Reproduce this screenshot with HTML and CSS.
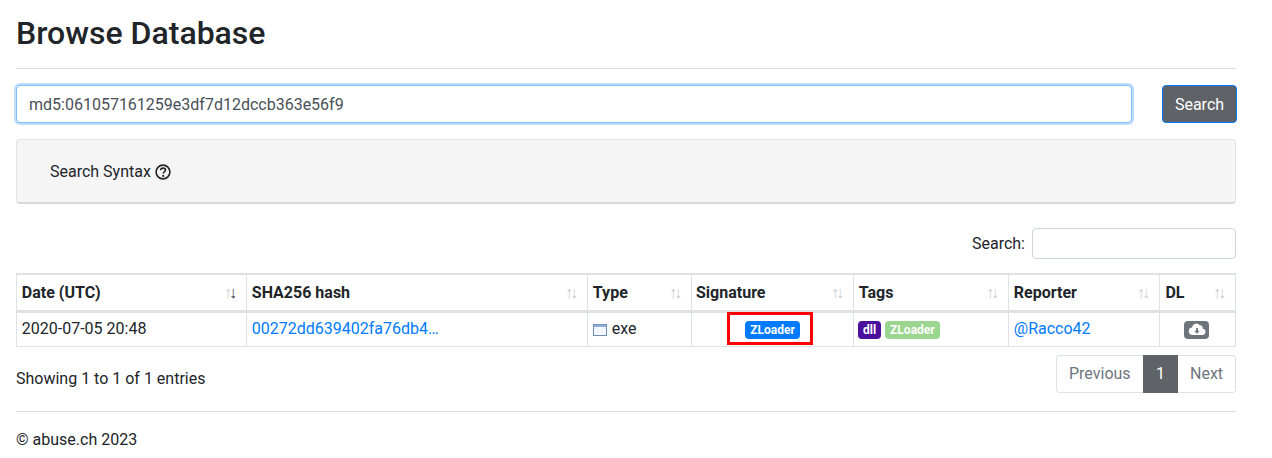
FILE: index.html
```html
<!DOCTYPE html>
<html lang="en">
<head>
<meta charset="utf-8">
<title>Browse Database</title>
<link rel="stylesheet" href="styles.css">
</head>
<body>
<div class="page">
  <h1 class="title">Browse Database</h1>
  <hr class="rule">
  <form class="search-row">
    <input class="search-input" type="text" value="md5:061057161259e3df7d12dccb363e56f9">
    <button class="search-btn" type="button">Search</button>
  </form>
  <div class="syntax">
    <span>Search Syntax</span>
    <svg class="help" viewBox="0 0 16 16" aria-hidden="true"><circle cx="8" cy="8" r="6.9" fill="none" stroke="#212529" stroke-width="1.6"/><path d="M5.6 6.3c.1-1.5 1.1-2.2 2.5-2.2 1.4 0 2.4.8 2.4 2 0 .9-.5 1.3-1.2 1.8-.7.4-1 .7-1 1.4v.3" fill="none" stroke="#212529" stroke-width="1.6"/><circle cx="8.2" cy="11.9" r="1.05" fill="#212529"/></svg>
  </div>
  <div class="filter">
    <label class="filter-label" for="f">Search:</label>
    <input class="filter-input" id="f" type="text">
  </div>
  <table class="grid">
    <thead>
      <tr>
        <th class="c-date">Date (UTC)<span class="sort"><i>↑</i><b>↓</b></span></th>
        <th class="c-hash">SHA256 hash<span class="sort"><i>↑</i><i>↓</i></span></th>
        <th class="c-type">Type<span class="sort"><i>↑</i><i>↓</i></span></th>
        <th class="c-sig">Signature<span class="sort"><i>↑</i><i>↓</i></span></th>
        <th class="c-tags">Tags<span class="sort"><i>↑</i><i>↓</i></span></th>
        <th class="c-rep">Reporter<span class="sort"><i>↑</i><i>↓</i></span></th>
        <th class="c-dl">DL<span class="sort"><i>↑</i><i>↓</i></span></th>
      </tr>
    </thead>
    <tbody>
      <tr>
        <td>2020-07-05 20:48</td>
        <td><a href="#">00272dd639402fa76db4…</a></td>
        <td><svg class="win" viewBox="0 0 14 12" aria-hidden="true"><rect x=".5" y=".5" width="13" height="11" fill="#f4f7fb" stroke="#6f8fbd"/><rect x="1" y="1" width="12" height="2" fill="#8fb0dc"/></svg> exe</td>
        <td class="center"><span class="marked"><span class="badge blue">ZLoader</span></span></td>
        <td class="tags"><span class="badge purple">dll</span> <span class="badge green">ZLoader</span></td>
        <td><a href="#">@Racco42</a></td>
        <td class="center dl-cell"><span class="badge gray dl"><svg viewBox="0 0 20 14" aria-hidden="true"><path fill="#fff" d="M16.3 6.1A3 3 0 0 0 13 2.4 4.6 4.6 0 0 0 4.6 4.6v.2A3.4 3.4 0 0 0 5.4 13h10.2a3.4 3.4 0 0 0 .7-6.9z"/><path fill="#6c757d" d="M9 5.2h2v3.2h2l-3 3.2-3-3.2h2z"/></svg></span></td>
      </tr>
    </tbody>
  </table>
  <div class="table-foot">
    <div class="info">Showing 1 to 1 of 1 entries</div>
    <ul class="pager">
      <li class="pg first">Previous</li>
      <li class="pg active">1</li>
      <li class="pg last">Next</li>
    </ul>
  </div>
  <hr class="rule foot-rule">
  <footer class="copy">© abuse.ch 2023</footer>
</div>
</body>
</html>
```
FILE: styles.css
```css
* { box-sizing: border-box; }
html, body { margin: 0; padding: 0; background: #fff; }
body {
  font-family: Roboto, "Liberation Sans", sans-serif;
  font-size: 16px;
  line-height: 24px;
  color: #212529;
  overflow: hidden;
  height: 458px;
}
.page { width: 1220px; margin-left: 16px; }
.title { margin: 0; padding-top: 14px; font-size: 32px; line-height: 38px; font-weight: 500; }
.rule { border: 0; border-top: 1px solid #dfdfdf; margin: 16px 0 0; }
.search-row { display: flex; align-items: flex-start; margin-top: 16px; width: 1221px; }
.search-input {
  width: 1116px; height: 38px; padding: 6px 12px;
  border: 1px solid #80bdff; border-radius: 4px;
  box-shadow: 0 0 0 2px rgba(0,123,255,.25);
  font: 16px/24px Roboto, sans-serif; color: #495057; outline: 0;
}
.search-btn {
  margin-left: 30px; width: 75px; height: 38px; padding: 1px 0 0;
  border: 1px solid #007bff; border-radius: 4px;
  background: #5f6367; color: #fff;
  font: 16px/24px Roboto, sans-serif;
}
.syntax {
  display: flex; align-items: center; gap: 4px;
  margin-top: 16px; height: 65px; padding: 1px 0 0 33px;
  background: #f5f5f5; border: 1px solid #e3e3e3; border-bottom: 2px solid #d8d8d8; border-radius: 4px;
}
.help { width: 16px; height: 16px; }
.filter { display: flex; justify-content: flex-end; align-items: center; margin-top: 24px; gap: 7px; }
.filter-input { width: 204px; height: 31px; border: 1px solid #ced4da; border-radius: 4px; }
.grid { width: 1220px; table-layout: fixed; border-collapse: collapse; margin-top: 14px; }
.grid th, .grid td { border: 1px solid #dee2e6; padding: 0 4.8px; text-align: left; }
.grid thead th { position: relative; height: 37px; padding-top: 2px; font-weight: 700; border-top: 2px solid #dee2e6; border-bottom: 3px solid #dee2e6; }
.grid td { height: 35px; }
.grid tbody tr td { border-top: 0; }
.grid th.c-sig, .grid td.tags { padding-left: 4px; }
.grid th.c-dl { padding-left: 5.4px; }
.c-date { width: 230px; } .c-hash { width: 341px; } .c-type { width: 104px; } .c-sig { width: 162px; }
.c-tags { width: 155px; } .c-rep { width: 151px; } .c-dl { width: 76px; }
.sort { position: absolute; right: 12px; top: 6px; font-size: 16px; font-weight: 400; letter-spacing: -3px; color: #333; }
.sort i { font-style: normal; color: #c9ccd0; }
.sort b { font-weight: 400; color: #3f4652; }
a { color: #007bff; text-decoration: none; }
.center { text-align: center !important; }
.win { width: 14px; height: 12px; vertical-align: -2px; margin-right: 1px; }
.badge {
  display: inline-block; padding: 3px 5px; border-radius: 4px;
  font-size: 12px; line-height: 12px; font-weight: 700; color: #fff; vertical-align: baseline;
}
.blue { background: #007bff; }
.purple { background: #4b0f9e; }
.green { background: #9ad68f; }
.gray { background: #6c757d; }
.marked { display: inline-block; width: 86px; height: 33px; margin: -2px 0 0 -6px; padding-left: 6px; line-height: 27px; border: 3px solid #f00; vertical-align: middle; text-align: center; }
.tags { white-space: nowrap; }
.dl-cell { padding-right: 6.8px !important; }
.dl { width: 25px; height: 18px; padding: 2px 0 0; vertical-align: middle; }
.dl svg { display: block; width: 18px; height: 13px; margin: 0 auto; }
.table-foot { display: flex; justify-content: space-between; margin-top: 8px; }
.info { padding-top: 12px; }
.pager { display: flex; list-style: none; margin: 0; padding: 0; }
.pg { height: 38px; padding: 6px 12px; border: 1px solid #dee2e6; color: #6c757d; background: #fff; }
.first { border-radius: 4px 0 0 4px; border-right: 0; width: 87px; }
.active { background: #5f6367; border-color: #5f6367; color: #fff; width: 35px; }
.last { border-radius: 0 4px 4px 0; border-left: 0; width: 58px; }
.foot-rule { margin-top: 18px; }
.copy { margin-top: 16px; }
```
